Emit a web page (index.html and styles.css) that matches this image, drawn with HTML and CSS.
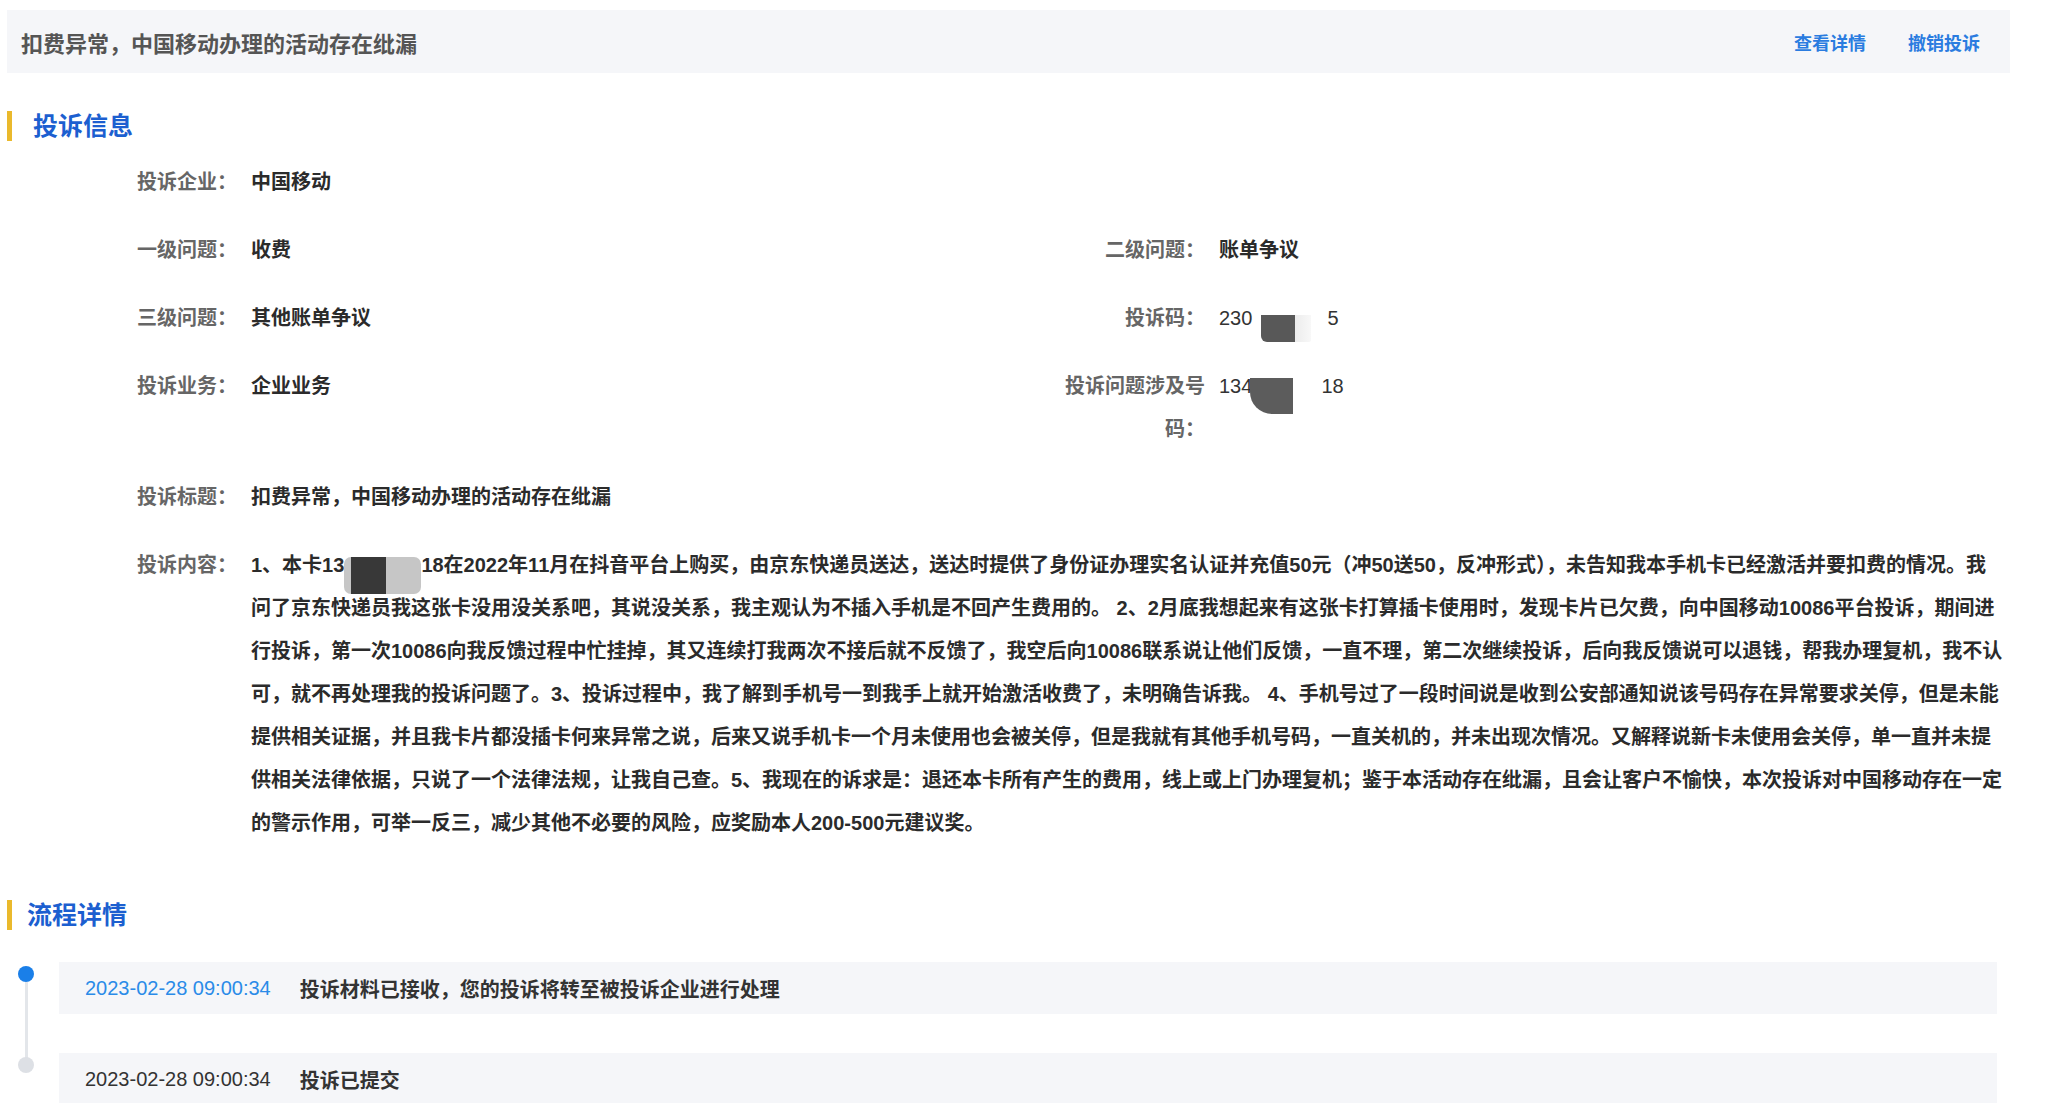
FILE: index.html
```html
<!DOCTYPE html>
<html lang="zh-CN">
<head>
<meta charset="utf-8">
<title>投诉详情</title>
<link rel="stylesheet" href="styles.css">
</head>
<body>
<div class="page">
  <header class="topbar">
    <div class="topbar-title">扣费异常，中国移动办理的活动存在纰漏</div>
    <nav class="topbar-actions">
      <a href="#">查看详情</a>
      <a href="#">撤销投诉</a>
    </nav>
  </header>

  <h2 class="section-title">投诉信息</h2>
  <div class="info">
    <div class="field">
      <div class="field-label">投诉企业：</div>
      <div class="field-value">中国移动</div>
    </div>
    <div class="field"></div>

    <div class="field">
      <div class="field-label">一级问题：</div>
      <div class="field-value">收费</div>
    </div>
    <div class="field">
      <div class="field-label">二级问题：</div>
      <div class="field-value">账单争议</div>
    </div>

    <div class="field">
      <div class="field-label">三级问题：</div>
      <div class="field-value">其他账单争议</div>
    </div>
    <div class="field">
      <div class="field-label">投诉码：</div>
      <div class="field-value num">230<span class="mask mask-code"></span>5</div>
    </div>

    <div class="field">
      <div class="field-label">投诉业务：</div>
      <div class="field-value">企业业务</div>
    </div>
    <div class="field">
      <div class="field-label">投诉问题涉及号码：</div>
      <div class="field-value num">134<span class="mask mask-phone"></span>18</div>
    </div>

    <div class="field full">
      <div class="field-label">投诉标题：</div>
      <div class="field-value">扣费异常，中国移动办理的活动存在纰漏</div>
    </div>

    <div class="field full">
      <div class="field-label">投诉内容：</div>
      <div class="field-value content">1、本卡13<span class="mask mask-card"></span>18在2022年11月在抖音平台上购买，由京东快递员送达，送达时提供了身份证办理实名认证并充值50元（冲50送50，反冲形式），未告知我本手机卡已经激活并要扣费的情况。我<br>问了京东快递员我这张卡没用没关系吧，其说没关系，我主观认为不插入手机是不回产生费用的。 2、2月底我想起来有这张卡打算插卡使用时，发现卡片已欠费，向中国移动10086平台投诉，期间进<br>行投诉，第一次10086向我反馈过程中忙挂掉，其又连续打我两次不接后就不反馈了，我空后向10086联系说让他们反馈，一直不理，第二次继续投诉，后向我反馈说可以退钱，帮我办理复机，我不认<br>可，就不再处理我的投诉问题了。3、投诉过程中，我了解到手机号一到我手上就开始激活收费了，未明确告诉我。 4、手机号过了一段时间说是收到公安部通知说该号码存在异常要求关停，但是未能<br>提供相关证据，并且我卡片都没插卡何来异常之说，后来又说手机卡一个月未使用也会被关停，但是我就有其他手机号码，一直关机的，并未出现次情况。又解释说新卡未使用会关停，单一直并未提<br>供相关法律依据，只说了一个法律法规，让我自己查。5、我现在的诉求是：退还本卡所有产生的费用，线上或上门办理复机；鉴于本活动存在纰漏，且会让客户不愉快，本次投诉对中国移动存在一定<br>的警示作用，可举一反三，减少其他不必要的风险，应奖励本人200-500元建议奖。</div>
    </div>
  </div>

  <h2 class="section-title section-title-2">流程详情</h2>
  <div class="timeline">
    <div class="tl-item active">
      <div class="tl-rail"><span class="tl-dot"></span></div>
      <div class="tl-box">
        <span class="tl-date">2023-02-28 09:00:34</span>
        <span class="tl-text">投诉材料已接收，您的投诉将转至被投诉企业进行处理</span>
      </div>
    </div>
    <div class="tl-item">
      <div class="tl-rail"><span class="tl-dot"></span></div>
      <div class="tl-box">
        <span class="tl-date">2023-02-28 09:00:34</span>
        <span class="tl-text">投诉已提交</span>
      </div>
    </div>
  </div>
</div>
</body>
</html>
```

FILE: styles.css
```css
* {
  box-sizing: border-box;
}

body {
  margin: 0;
  background: #ffffff;
  font-family: "Liberation Sans", "Noto Sans CJK SC", sans-serif;
  color: #333333;
}

.page {
  padding: 10px 36px 0 7px;
}

/* top bar */
.topbar {
  height: 63px;
  background: #f5f6f9;
  display: flex;
  align-items: center;
  justify-content: space-between;
  padding: 0 30px 0 14px;
}

.topbar-title {
  font-size: 22px;
  font-weight: 700;
  color: #555555;
}

.topbar-actions {
  display: flex;
  gap: 42px;
}

.topbar-actions a {
  font-size: 18px;
  font-weight: 700;
  color: #2a7ce0;
  text-decoration: none;
}

/* section headings */
.section-title {
  margin: 38px 0 0;
  height: 30px;
  line-height: 30px;
  border-left: 5px solid #eab92c;
  padding-left: 21px;
  font-size: 25px;
  font-weight: 700;
  color: #1c5fd0;
}

.section-title-2 {
  margin-top: 55px;
  padding-left: 15px;
}

/* info grid */
.info {
  display: grid;
  grid-template-columns: 968px 948px;
  row-gap: 25px;
  margin-top: 20px;
  padding-left: 89px;
  font-size: 20px;
  line-height: 43px;
}

.field {
  display: flex;
}

.field.full {
  grid-column: 1 / -1;
}

.field-label {
  width: 141px;
  flex: none;
  text-align: right;
  color: #666666;
  font-weight: 700;
}

.field-value {
  flex: 1;
  min-width: 0;
  margin-left: 14px;
  font-weight: 700;
  color: #2b2b2b;
}

.field-value.num {
  font-weight: 400;
  color: #333333;
}

/* redaction masks */
.mask {
  display: inline-block;
}

.mask-code {
  width: 50px;
  height: 27px;
  margin: -6px 16px -6px 9px;
  vertical-align: -11px;
  background: linear-gradient(90deg, #585858 0, #585858 34px, #ececec 34px, #f8f8f8 50px);
  border-radius: 0 0 2px 6px;
}

.mask-phone {
  width: 43px;
  height: 36px;
  margin: -8px 28px -8px -2px;
  vertical-align: -13px;
  background: #5c5c5c;
  border-radius: 0 0 0 22px;
}

.mask-card {
  width: 77px;
  height: 37px;
  margin: -8px 0 -8px 0;
  vertical-align: -14px;
  border-radius: 7px;
  background: linear-gradient(90deg, #c6c6c6 0, #c6c6c6 7px, #383838 7px, #383838 42px, #c6c6c6 42px);
}

/* timeline */
.timeline {
  margin-top: 32px;
  margin-right: 13px;
}

.tl-item {
  display: flex;
}

.tl-item + .tl-item {
  margin-top: 39px;
}

.tl-rail {
  width: 52px;
  flex: none;
  position: relative;
}

.tl-dot {
  display: block;
  width: 16px;
  height: 16px;
  margin: 4px 0 0 11px;
  border-radius: 50%;
  background: #dde0e5;
}

.tl-item.active .tl-dot {
  background: #1a7fe8;
}

.tl-item:not(:last-child) .tl-rail::after {
  content: "";
  position: absolute;
  left: 18px;
  top: 20px;
  width: 3px;
  height: 78px;
  background: #e3e6ea;
}

.tl-box {
  flex: 1;
  height: 52px;
  display: flex;
  align-items: center;
  padding-left: 26px;
  background: #f5f6f9;
  font-size: 20px;
}

.tl-date {
  margin-right: 29px;
  font-weight: 400;
  color: #333333;
}

.tl-item.active .tl-date {
  color: #2a8be8;
}

.tl-text {
  font-weight: 700;
  color: #333333;
}
```
